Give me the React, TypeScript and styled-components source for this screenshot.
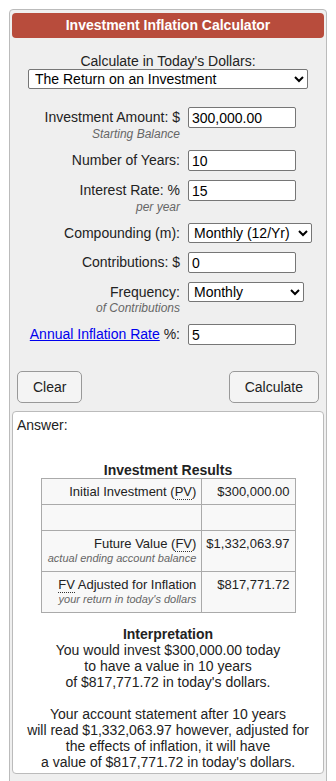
import styled, { createGlobalStyle } from "styled-components";

const Global = createGlobalStyle`
  body {
    margin: 0;
    background: #ffffff;
    font-family: "Liberation Sans", Arial, sans-serif;
    color: #222;
  }
`;

const Panel = styled.div`
  margin: 9px 9px 0;
  width: 318px;
  box-sizing: border-box;
  background: #efefef;
  border: 1px solid #bbb;
  border-radius: 4px;
  padding: 3px 2px 12px;
`;

const Title = styled.div`
  height: 25px;
  line-height: 25px;
  background: #b84c3c;
  border-radius: 4px;
  color: #fff;
  font-weight: bold;
  font-size: 14px;
  text-align: center;
`;

const Intro = styled.div`
  margin-top: 15px;
  text-align: center;
  font-size: 14px;
  line-height: 16px;
`;

const WideSelect = styled.select`
  display: block;
  margin: 0 auto;
  width: 280px;
  height: 20px;
  font-family: "Liberation Sans", Arial, sans-serif;
  font-size: 14px;
  color: #000;
  background: #fff;
  border: 1px solid #767676;
  border-radius: 2px;
  padding: 0 2px;
`;

const Form = styled.div`
  margin-top: 18px;
  display: grid;
  grid-template-columns: 168px 1fr;
  column-gap: 8px;
  row-gap: 9px;
`;

const Label = styled.div<{ $h?: number }>`
  text-align: right;
  font-size: 14px;
  line-height: ${(p) => p.$h ?? 21}px;
`;

const Sub = styled.div`
  font-size: 12px;
  line-height: 13px;
  font-style: italic;
  color: #666;
`;

const Field = styled.div`
  display: flex;
  align-items: flex-start;
`;

const TextInput = styled.input<{ $w?: number }>`
  width: ${(p) => p.$w ?? 108}px;
  height: 21px;
  box-sizing: border-box;
  border: 1px solid #767676;
  border-radius: 2px;
  padding: 0 3px;
  font-family: "Liberation Sans", Arial, sans-serif;
  font-size: 14px;
  color: #000;
  background: #fff;
`;

const SmallSelect = styled.select<{ $w: number }>`
  width: ${(p) => p.$w}px;
  height: 20px;
  font-family: "Liberation Sans", Arial, sans-serif;
  font-size: 14px;
  color: #000;
  background: #fff;
  border: 1px solid #767676;
  border-radius: 2px;
  padding: 0 1px;
`;

const Link = styled.a`
  color: #0000ee;
  text-decoration: underline;
`;

const Buttons = styled.div`
  margin-top: 26px;
  padding: 0 5px;
  display: flex;
  justify-content: space-between;
`;

const Button = styled.button`
  height: 32px;
  padding: 0 15px;
  font-family: "Liberation Sans", Arial, sans-serif;
  font-size: 14px;
  color: #222;
  background: #f4f4f4;
  border: 1px solid #999;
  border-radius: 5px;
`;

const Answer = styled.div`
  margin-top: 8px;
  background: #fff;
  border: 1px solid #bbb;
  border-radius: 4px;
  padding: 5px 4px 3px;
  font-size: 14px;
  line-height: 16px;
`;

const Heading = styled.div<{ $top: number }>`
  margin-top: ${(p) => p.$top}px;
  text-align: center;
  font-weight: bold;
`;

const Results = styled.table`
  margin: 0 auto;
  width: 255px;
  border-collapse: collapse;
  font-size: 13px;
  line-height: 15px;
`;

const Cell = styled.td<{ $w?: number }>`
  ${(p) => (p.$w ? `width: ${p.$w}px;` : "")}
  background: #f8f8f8;
  border: 1px solid #aaa;
  padding: 5px 5px 5px 4px;
  text-align: right;
  vertical-align: top;
`;

const CellSub = styled.div`
  font-size: 11px;
  line-height: 15px;
  font-style: italic;
  color: #666;
`;

const Abbr = styled.abbr`
  text-decoration: none;
  border-bottom: 1px dotted #333;
`;

const Para = styled.p`
  margin: 0;
  text-align: center;
`;

export default function App() {
  return (
    <>
      <Global />
      <Panel>
        <Title>Investment Inflation Calculator</Title>
        <Intro>Calculate in Today's Dollars:</Intro>
        <WideSelect defaultValue="ret">
          <option value="ret">The Return on an Investment</option>
        </WideSelect>
        <Form>
          <Label>
            Investment Amount: $<Sub>Starting Balance</Sub>
          </Label>
          <Field>
            <TextInput defaultValue="300,000.00" />
          </Field>
          <Label>Number of Years:</Label>
          <Field>
            <TextInput defaultValue="10" />
          </Field>
          <Label>
            Interest Rate: %<Sub>per year</Sub>
          </Label>
          <Field>
            <TextInput defaultValue="15" />
          </Field>
          <Label $h={20}>Compounding (m):</Label>
          <Field>
            <SmallSelect $w={124} defaultValue="12">
              <option value="12">Monthly (12/Yr)</option>
            </SmallSelect>
          </Field>
          <Label>Contributions: $</Label>
          <Field>
            <TextInput defaultValue="0" />
          </Field>
          <Label $h={20}>
            Frequency:<Sub>of Contributions</Sub>
          </Label>
          <Field>
            <SmallSelect $w={116} defaultValue="m">
              <option value="m">Monthly</option>
            </SmallSelect>
          </Field>
          <Label>
            <Link href="#">Annual Inflation Rate</Link> %:
          </Label>
          <Field>
            <TextInput defaultValue="5" />
          </Field>
        </Form>
        <Buttons>
          <Button>Clear</Button>
          <Button>Calculate</Button>
        </Buttons>
        <Answer>
          <div>Answer:</div>
          <Heading $top={29}>Investment Results</Heading>
          <Results>
            <tbody>
              <tr>
                <Cell $w={160}>
                  Initial Investment (<Abbr title="Present Value">PV</Abbr>)
                </Cell>
                <Cell>$300,000.00</Cell>
              </tr>
              <tr>
                <Cell>&nbsp;</Cell>
                <Cell>&nbsp;</Cell>
              </tr>
              <tr>
                <Cell>
                  Future Value (<Abbr title="Future Value">FV</Abbr>)
                  <CellSub>actual ending account balance</CellSub>
                </Cell>
                <Cell>$1,332,063.97</Cell>
              </tr>
              <tr>
                <Cell>
                  <Abbr title="Future Value">FV</Abbr> Adjusted for Inflation
                  <CellSub>your return in today's dollars</CellSub>
                </Cell>
                <Cell>$817,771.72</Cell>
              </tr>
            </tbody>
          </Results>
          <Heading $top={13}>Interpretation</Heading>
          <Para>
            You would invest $300,000.00 today
            <br />
            to have a value in 10 years
            <br />
            of $817,771.72 in today's dollars.
            <br />
            <br />
            Your account statement after 10 years
            <br />
            will read $1,332,063.97 however, adjusted for
            <br />
            the effects of inflation, it will have
            <br />
            a value of $817,771.72 in today's dollars.
          </Para>
        </Answer>
      </Panel>
    </>
  );
}
